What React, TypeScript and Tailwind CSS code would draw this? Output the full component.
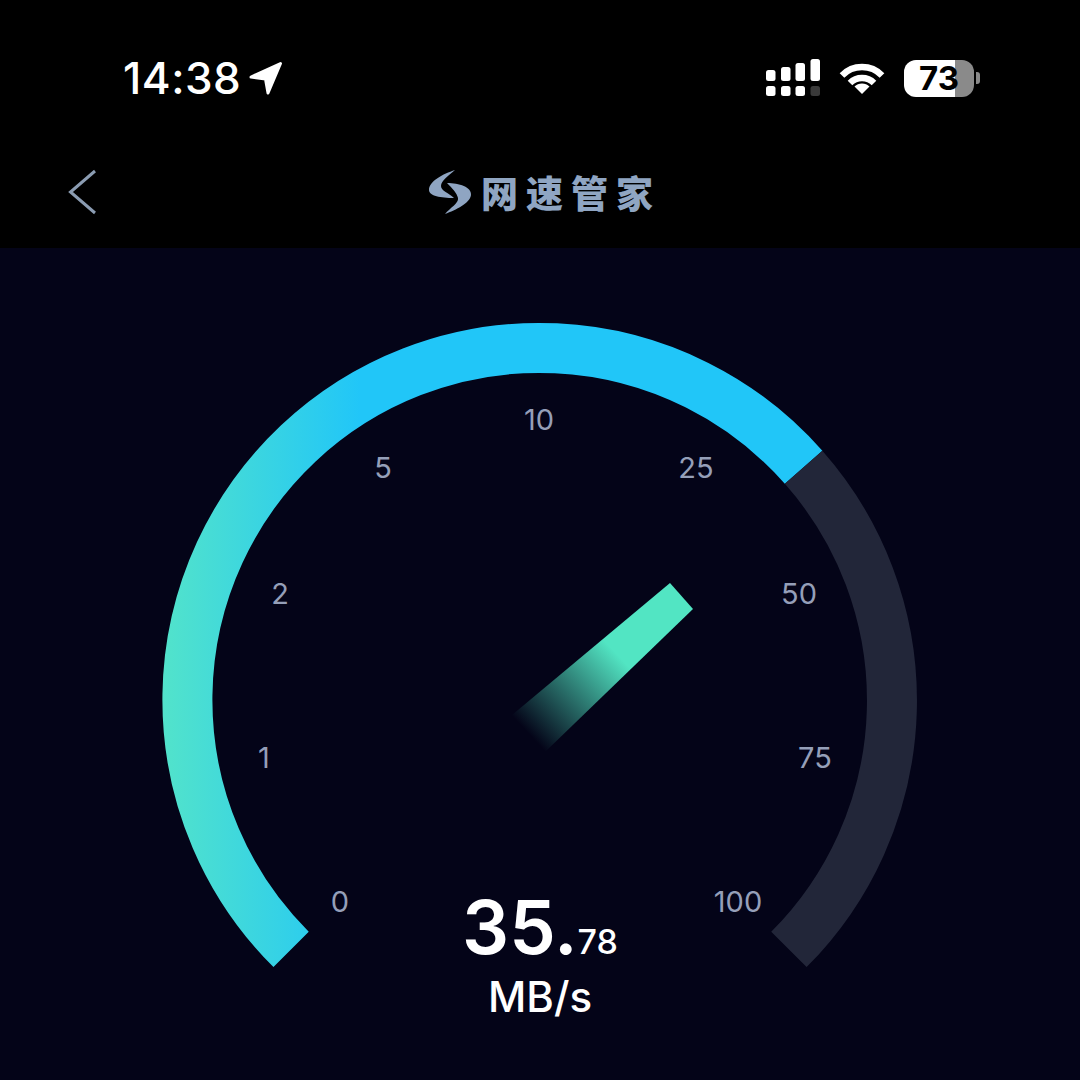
import React from 'react';

const ticks = [
  { label: '0', x: 340, y: 901 },
  { label: '1', x: 264, y: 757 },
  { label: '2', x: 280, y: 593 },
  { label: '5', x: 383, y: 467 },
  { label: '10', x: 539, y: 419 },
  { label: '25', x: 696, y: 467 },
  { label: '50', x: 799, y: 593 },
  { label: '75', x: 815, y: 757 },
  { label: '100', x: 738, y: 901 },
];

const SignalIcon = () => (
  <svg width="54" height="38" viewBox="0 0 54 38" fill="#fff">
    <rect x="0" y="11" width="9.5" height="11" rx="2.5" />
    <rect x="15" y="8" width="9.5" height="14" rx="2.5" />
    <rect x="29.5" y="4" width="9.5" height="18" rx="2.5" />
    <rect x="44.5" y="0" width="9.5" height="22" rx="2.5" />
    <rect x="0" y="27" width="9.5" height="10" rx="2.5" />
    <rect x="15" y="27" width="9.5" height="10" rx="2.5" />
    <rect x="29.5" y="27" width="9.5" height="10" rx="2.5" />
    <rect x="44.5" y="27" width="9.5" height="10" rx="2.5" fill="#3a3a3a" />
  </svg>
);

const WifiIcon = () => (
  <svg width="48" height="34" viewBox="0 0 48 34" fill="none" stroke="#fff" strokeWidth="6.5">
    <path d="M4 14.5 A28 28 0 0 1 44 14.5" />
    <path d="M12 22 A17 17 0 0 1 36 22" />
    <path d="M24 33 L16.5 25.5 A10.6 10.6 0 0 1 31.5 25.5 Z" fill="#fff" stroke="none" />
  </svg>
);

const BatteryIcon = () => (
  <div className="flex items-center gap-[2px]">
    <div className="flex h-[37px] w-[70px] items-center justify-center rounded-[12px] bg-[linear-gradient(90deg,#ffffff_73%,#8a8a8a_73%)] font-['Inter',sans-serif] text-[33px] font-bold leading-none text-black">
      73
    </div>
    <div className="h-[12px] w-[4px] rounded-r-[3px] bg-[#8a8a8a]" />
  </div>
);

const Logo = () => (
  <svg width="44" height="46" viewBox="428 170 44 46" fill="#8fa5c2">
    <path d="M455 171 C443 175 429 182 429 191 C429 197 441 199 454 199 C449 194 441 192 441 187 C441 182 449 176 455 171Z" />
    <path d="M447 184 C459 184 472 188 471 196 C470 204 456 211 445 215 C450 209 459 204 458 199 C457 194 452 189 447 184Z" />
  </svg>
);

const Gauge = () => (
  <svg className="col-start-1 row-start-1 block h-[832px] w-[1080px]" viewBox="0 248 1080 832" fill="none">
    <defs>
      <linearGradient id="arcFill" gradientUnits="userSpaceOnUse" x1="163" y1="0" x2="360" y2="0">
        <stop offset="0" stopColor="#52e3cb" />
        <stop offset="1" stopColor="#21c6f8" />
      </linearGradient>
      <linearGradient id="needleFill" gradientUnits="userSpaceOnUse" x1="528" y1="733" x2="615" y2="652">
        <stop offset="0" stopColor="#52e5c3" stopOpacity="0" />
        <stop offset="1" stopColor="#52e5c3" />
      </linearGradient>
    </defs>
    <path d="M291.1 949.4 A352 352 0 1 1 803.6 467.3" stroke="url(#arcFill)" strokeWidth="50" />
    <path d="M803.6 467.3 A352 352 0 0 1 788.9 949.4" stroke="#222639" strokeWidth="50" />
    <polygon points="670,583 693,609 545,752 512,715" fill="url(#needleFill)" />
    {ticks.map((t) => (
      <text
        key={t.label}
        x={t.x}
        y={t.y + 10.5}
        textAnchor="middle"
        fill="#959fb8"
        className="font-['Inter',sans-serif] text-[29px]"
      >
        {t.label}
      </text>
    ))}
  </svg>
);

export default function App() {
  return (
    <div className="flex h-[1080px] w-[1080px] flex-col overflow-hidden bg-black font-['Inter',sans-serif] text-white">
      <div className="flex h-[130px] shrink-0 items-start justify-between pl-[123px] pr-[100px] pt-[52px]">
        <div className="flex items-center gap-[6px]">
          <span className="text-[44px] font-medium leading-[52px] tracking-[0.5px]">14:38</span>
          <svg width="36" height="36" viewBox="248 60 36 36" fill="#fff" stroke="#fff" strokeWidth="3" strokeLinejoin="round">
            <path d="M252 77 L281.5 63.5 L269 93 L266.5 79 Z" />
          </svg>
        </div>
        <div className="flex items-center gap-[18px] pt-[7px]">
          <SignalIcon />
          <WifiIcon />
          <BatteryIcon />
        </div>
      </div>

      <div className="grid h-[118px] shrink-0 grid-cols-[1fr_auto_1fr] items-center pt-[6px]">
        <svg className="ml-[66px]" width="34" height="50" viewBox="66 168 34 50" fill="none" stroke="#8b9cb2" strokeWidth="3">
          <path d="M95 172 L70.5 193 L95 214" />
        </svg>
        <div className="flex items-center gap-[9px] pl-[9px]">
          <Logo />
          <span className="font-['Noto_Sans_CJK_SC',sans-serif] text-[37px] font-black leading-none tracking-[8px] text-[#8fa5c2]">
            网速管家
          </span>
        </div>
        <div />
      </div>

      <div className="grid flex-1 bg-[#040418]">
        <Gauge />
        <div className="col-start-1 row-start-1 flex flex-col items-center self-end pb-[58px]">
          <div className="flex items-baseline">
            <span className="text-[74px] font-semibold leading-[62px]">35.</span>
            <span className="text-[34px] font-medium leading-none">78</span>
          </div>
          <div className="mt-[13px] text-[42px] font-medium leading-[50px]">MB/s</div>
        </div>
      </div>
    </div>
  );
}
